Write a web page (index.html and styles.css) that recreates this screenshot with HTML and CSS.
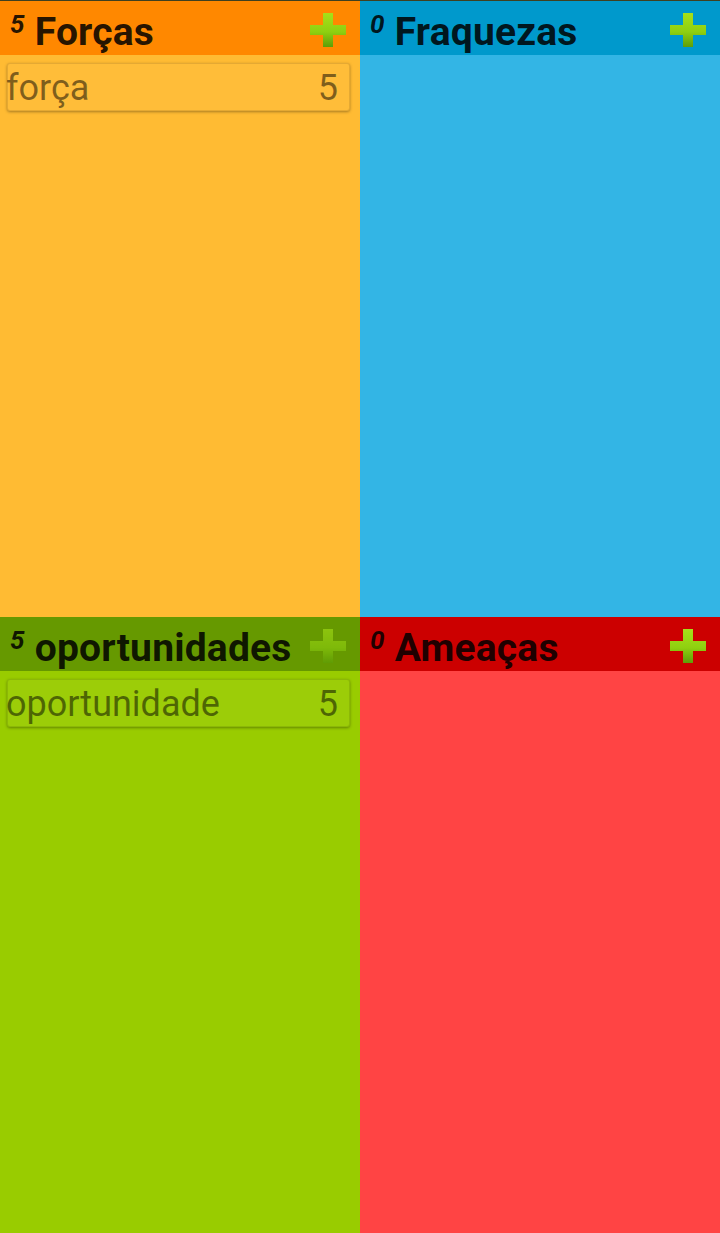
FILE: index.html
```html
<!DOCTYPE html>
<html lang="pt">
<head>
<meta charset="utf-8">
<title>SWOT</title>
<link rel="stylesheet" href="styles.css">
</head>
<body>
<svg width="0" height="0" class="defs" aria-hidden="true">
  <defs>
    <linearGradient id="plusg" x1="0" y1="0" x2="0" y2="1">
      <stop offset="0" stop-color="#a6e019"/>
      <stop offset="0.55" stop-color="#8fd010"/>
      <stop offset="1" stop-color="#5e9e08"/>
    </linearGradient>
  </defs>
</svg>
<main class="grid">
  <section class="quad q-forcas">
    <header class="head">
      <h2 class="title"><span class="count">5</span>Forças</h2>
      <svg class="plus" viewBox="0 0 36 34"><path d="M13 0h10v12H36v10H23V34h-10V22H0v-10h13z" fill="url(#plusg)"/></svg>
    </header>
    <ul class="list">
      <li class="item"><span class="name">força</span><span class="val">5</span></li>
    </ul>
  </section>
  <section class="quad q-fraquezas">
    <header class="head">
      <h2 class="title"><span class="count">0</span>Fraquezas</h2>
      <svg class="plus" viewBox="0 0 36 34"><path d="M13 0h10v12H36v10H23V34h-10V22H0v-10h13z" fill="url(#plusg)"/></svg>
    </header>
    <ul class="list"></ul>
  </section>
  <section class="quad q-oport">
    <header class="head">
      <h2 class="title"><span class="count">5</span>oportunidades</h2>
      <svg class="plus faded" viewBox="0 0 36 34"><path d="M13 0h10v12H36v10H23V34h-10V22H0v-10h13z" fill="url(#plusg)"/></svg>
    </header>
    <ul class="list">
      <li class="item"><span class="name">oportunidade</span><span class="val">5</span></li>
    </ul>
  </section>
  <section class="quad q-ameacas">
    <header class="head">
      <h2 class="title"><span class="count">0</span>Ameaças</h2>
      <svg class="plus" viewBox="0 0 36 34"><path d="M13 0h10v12H36v10H23V34h-10V22H0v-10h13z" fill="url(#plusg)"/></svg>
    </header>
    <ul class="list"></ul>
  </section>
</main>
</body>
</html>
```

FILE: styles.css
```css
* { box-sizing: border-box; }
html, body { margin: 0; padding: 0; }
body {
  width: 720px;
  height: 1233px;
  overflow: hidden;
  border-top: 1px solid #3f4020;
  font-family: Roboto, "Noto Sans", "Liberation Sans", sans-serif;
  background: #222;
}
.defs { position: absolute; width: 0; height: 0; }
.grid {
  display: grid;
  grid-template-columns: 360px 360px;
  grid-template-rows: 616px 616px;
}
.quad { display: flex; flex-direction: column; }
.head {
  height: 54px;
  display: flex;
  align-items: center;
  justify-content: space-between;
  padding: 0 14px 0 10px;
}
.title {
  margin: 0;
  font-size: 39px;
  font-weight: 700;
  line-height: 54px;
  color: rgba(0, 0, 0, 0.86);
  white-space: nowrap;
  letter-spacing: 0.2px;
}
.count {
  font-size: 26px;
  font-style: italic;
  font-weight: 700;
  vertical-align: 12px;
  margin-right: 10px;
}
.plus { width: 36px; height: 34px; flex: none; margin-top: 3px; }
.plus.faded { opacity: 0.6; }
.list { list-style: none; margin: 0; padding: 8px 10px 0 7px; }
.item {
  height: 48px;
  display: flex;
  align-items: center;
  justify-content: space-between;
  padding: 2px 12px 0 0;
  border-radius: 3px;
  box-shadow: inset 0 0 0 1px rgba(0,0,0,0.10), 0 1px 3px rgba(0,0,0,0.35);
  background: rgba(255,255,255,0.03);
  font-size: 36px;
  color: rgba(0, 0, 0, 0.5);
}
.name { margin-left: -1px; }
.q-forcas { background: #ffbb33; }
.q-forcas .head { background: #ff8800; }
.q-fraquezas { background: #33b5e5; }
.q-fraquezas .head { background: #0099cc; }
.q-oport { background: #99cc00; }
.q-oport .head { background: #669900; }
.q-ameacas { background: #ff4444; }
.q-ameacas .head { background: #cc0000; }
```
